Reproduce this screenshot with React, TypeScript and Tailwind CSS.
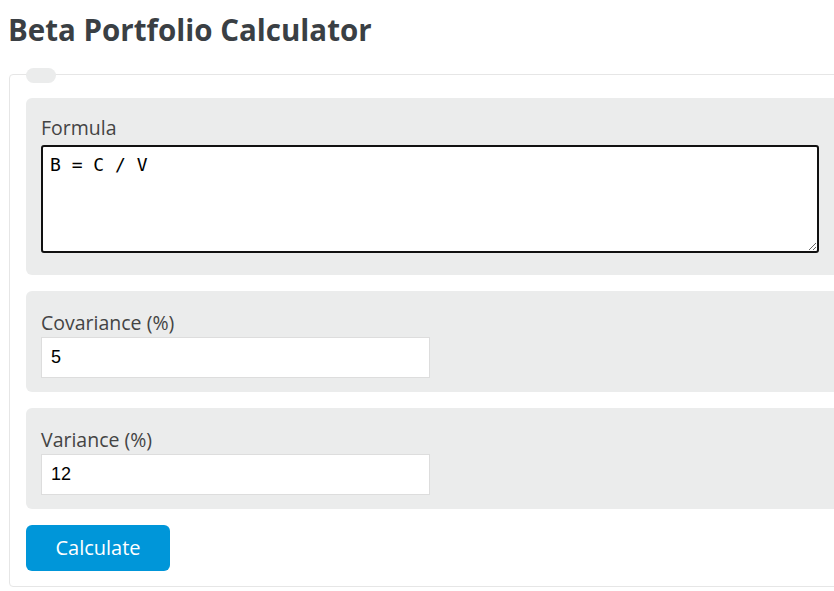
import { useState } from 'react';

const SANS = { fontFamily: '"Open Sans", "Noto Sans", Arial, sans-serif' };

function Field({ label, value, onChange }: { label: string; value: string; onChange: (v: string) => void }) {
  return (
    <div className="rounded-md bg-[#ebecec] px-[15px] pt-[20px] pb-[14px]">
      <label className="block text-[19.5px] leading-[24px] text-[#444]">{label}</label>
      <input
        value={value}
        onChange={e => onChange(e.target.value)}
        className="mt-[2px] block h-[41px] w-[389px] border border-[#ddd] bg-white px-[9px] text-[18px] text-black outline-none"
        style={{ fontFamily: '"Liberation Sans", Arial, sans-serif' }}
      />
    </div>
  );
}

export default function App() {
  const [cov, setCov] = useState('5');
  const [variance, setVariance] = useState('12');

  return (
    <div className="h-[591px] w-full overflow-hidden bg-white" style={SANS}>
      <h1 className="pl-[8px] pt-[10px] text-[29.5px] font-bold leading-[40px] text-[#3a3f44]">Beta Portfolio Calculator</h1>

      {/* calculator frame */}
      <fieldset className="relative ml-[9px] mt-[24px] w-[856px] rounded border border-[#e6e6e6] px-[16px] pt-[23px] pb-[15px]">
        <div className="absolute left-[16px] top-[-7px] h-[15px] w-[30px] rounded-lg bg-[#ebecec]" />

        <div className="flex flex-col gap-[16px]">
          <div className="rounded-md bg-[#ebecec] px-[15px] pt-[18px] pb-[22px]">
            <label className="block text-[19.5px] leading-[24px] text-[#444]">Formula</label>
            <textarea
              readOnly
              value="B = C / V"
              className="mt-[5px] block h-[108px] w-[778px] rounded-[3px] border-2 border-[#111] bg-white px-[7px] py-[7px] text-[18px] leading-[22px] text-black outline-none"
              style={{ fontFamily: '"DejaVu Sans Mono", "Liberation Mono", monospace' }}
            />
          </div>

          <Field label="Covariance (%)" value={cov} onChange={setCov} />
          <Field label="Variance (%)" value={variance} onChange={setVariance} />

          <div>
            <button className="h-[46px] w-[144px] rounded-md bg-[#0096d9] text-[20px] text-white">Calculate</button>
          </div>
        </div>
      </fieldset>
    </div>
  );
}
